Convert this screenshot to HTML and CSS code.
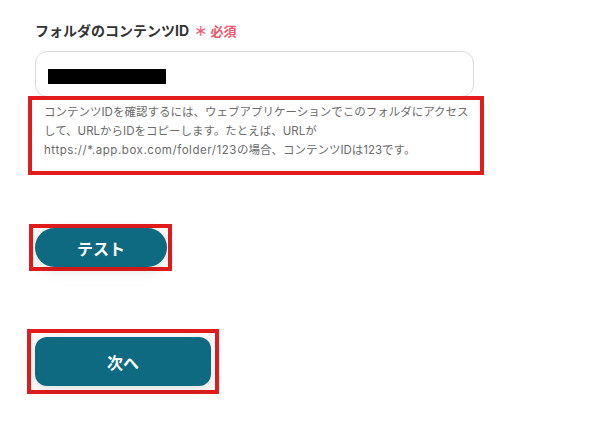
FILE: index.html
```html
<!DOCTYPE html>
<html lang="ja">
<head>
    <meta charset="UTF-8">
    <meta name="viewport" content="width=device-width, initial-scale=1.0">
    <title>フォルダのコンテンツID</title>
    <link rel="stylesheet" href="styles.css">
</head>
<body>
    <div class="form">
        <div class="field">
            <label class="field-label" for="content_id">フォルダのコンテンツID <span class="required">＊ 必須</span></label>
            <div class="text-input" id="content_id">
                <span class="masked"></span>
            </div>
            <p class="help mark">コンテンツIDを確認するには、ウェブアプリケーションでこのフォルダにアクセスして、URLからIDをコピーします。たとえば、URLが<span class="url">https://*.app.box.com/folder/123</span>の場合、コンテンツIDは123です。</p>
        </div>

        <div class="mark mark-test">
            <button class="btn btn-test">テスト</button>
        </div>

        <div class="mark mark-next">
            <button class="btn btn-next">次へ</button>
        </div>
    </div>
</body>
</html>
```

FILE: styles.css
```css
body {
    margin: 0;
    padding: 0;
    background-color: #fff;
    font-family: Inter, "Noto Sans CJK JP", sans-serif;
    color: #333;
}

.form {
    padding: 20px 0 0 35px;
    width: 439px;
}

.field-label {
    display: block;
    font-size: 14px;
    font-weight: bold;
    line-height: 22px;
    color: #333;
}

.required {
    color: #f0566e;
    font-size: 13px;
    margin-left: 2px;
}

.text-input {
    margin-top: 9px;
    height: 46px;
    box-sizing: border-box;
    border: 1px solid #d8dbe0;
    border-radius: 12px;
    padding-left: 12px;
    display: flex;
    align-items: center;
}

.masked {
    display: block;
    width: 118px;
    height: 15px;
    margin-top: 4px;
    background: #000;
}

.mark {
    border: 4px solid #e21c1c;
    box-sizing: border-box;
}

.help {
    margin: -1px 0 0 -7px;
    width: 456px;
    padding: 3px 10px 11px 12px;
    font-size: 11.5px;
    line-height: 19px;
    color: #6b6b6b;
}

.help .url {
    letter-spacing: 0.55px;
}

.mark-test {
    display: inline-block;
    margin: 49px 0 0 -6px;
    padding: 0 1px 0 2px;
}

.mark-next {
    width: 192px;
    margin: 58px 0 0 -8px;
    padding: 4px;
}

.btn {
    display: block;
    border: none;
    background-color: #0e6a80;
    color: #fff;
    font-family: inherit;
    font-weight: bold;
    font-size: 16px;
    cursor: pointer;
    box-shadow: 0 3px 14px rgba(0, 0, 0, 0.14);
}

.btn-test {
    width: 132px;
    height: 39px;
    border-radius: 20px;
}

.btn-next {
    width: 176px;
    height: 49px;
    border-radius: 12px;
}
```
